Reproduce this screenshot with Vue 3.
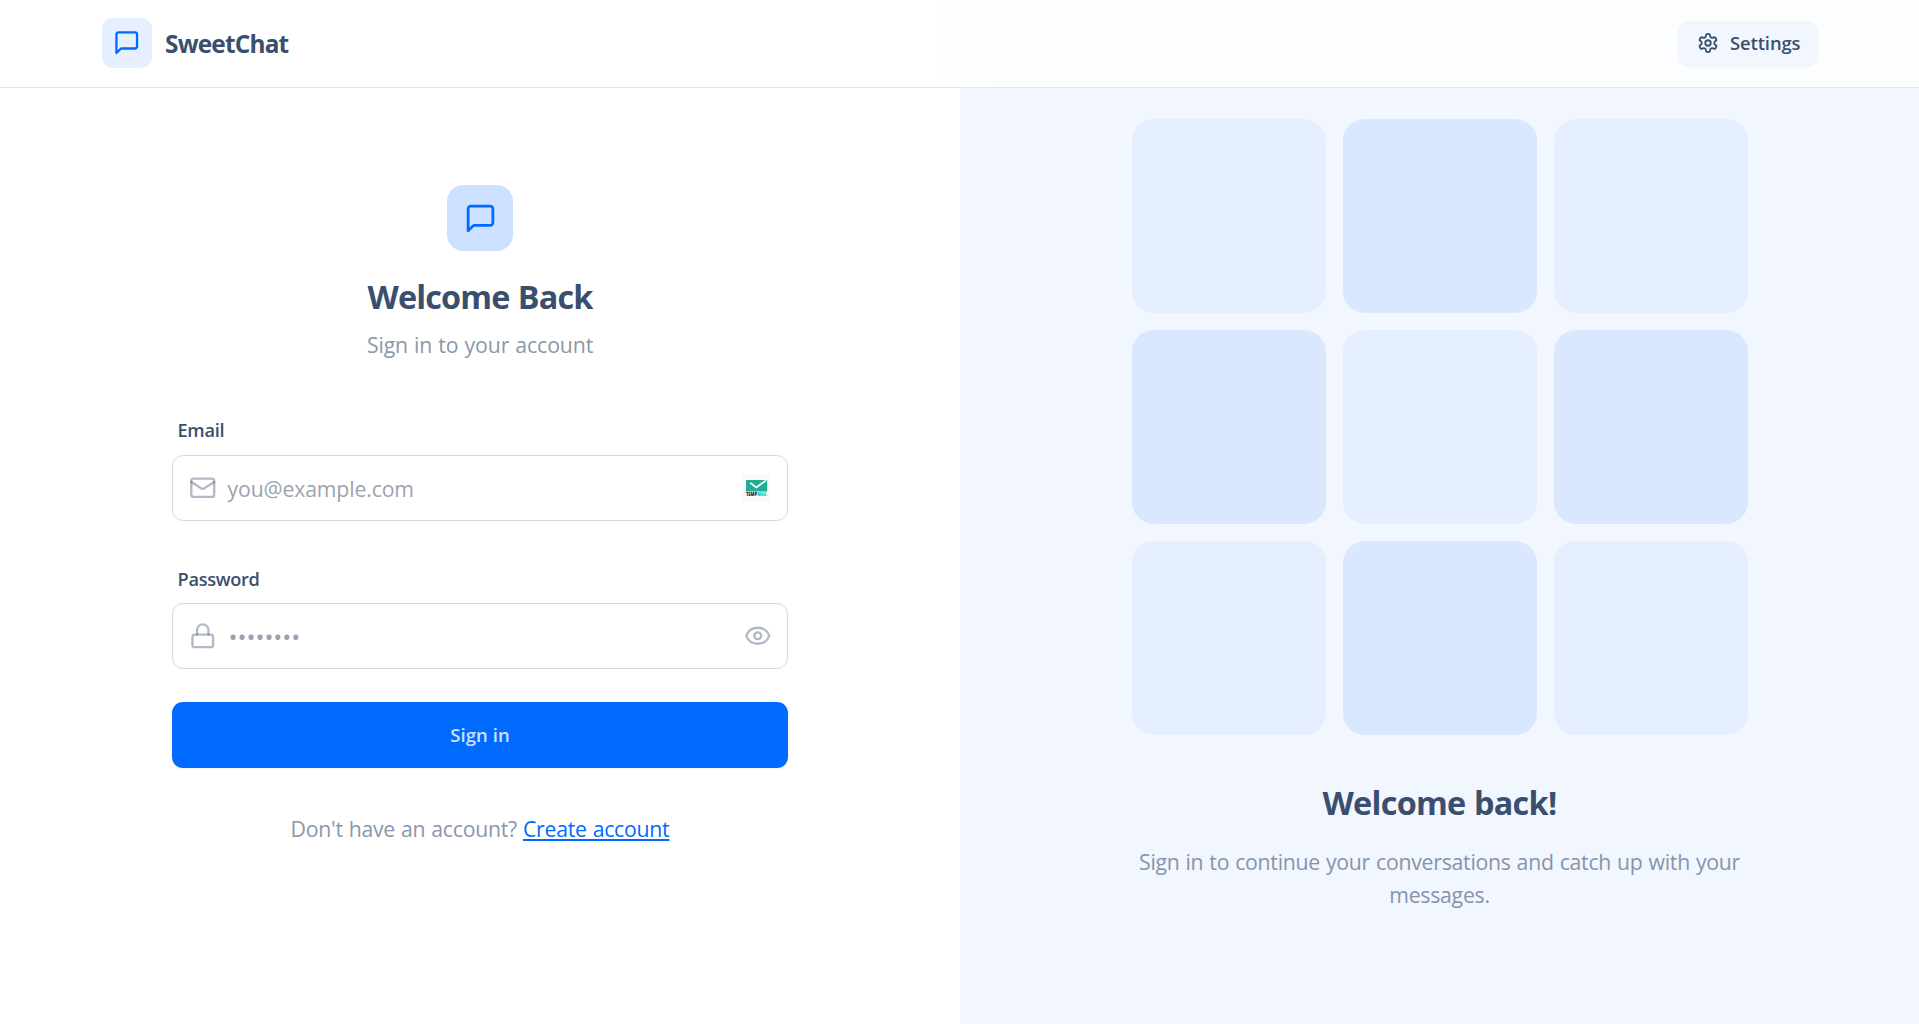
<script setup>
const tiles = [false, true, false, true, false, true, false, true, false]
</script>

<template>
  <div class="page">
    <header class="bar">
      <div class="brand">
        <span class="brand-icon">
          <svg class="icon chat" viewBox="0 0 24 24"><path d="M21 15a2 2 0 0 1-2 2H7l-4 4V5a2 2 0 0 1 2-2h14a2 2 0 0 1 2 2z" /></svg>
        </span>
        <span class="brand-name">SweetChat</span>
      </div>
      <a class="settings">
        <svg class="icon gear" viewBox="0 0 24 24">
          <path d="M12.22 2h-.44a2 2 0 0 0-2 2v.18a2 2 0 0 1-1 1.73l-.43.25a2 2 0 0 1-2 0l-.15-.08a2 2 0 0 0-2.73.73l-.22.38a2 2 0 0 0 .73 2.73l.15.1a2 2 0 0 1 1 1.72v.51a2 2 0 0 1-1 1.74l-.15.09a2 2 0 0 0-.73 2.73l.22.38a2 2 0 0 0 2.73.73l.15-.08a2 2 0 0 1 2 0l.43.25a2 2 0 0 1 1 1.73V20a2 2 0 0 0 2 2h.44a2 2 0 0 0 2-2v-.18a2 2 0 0 1 1-1.73l.43-.25a2 2 0 0 1 2 0l.15.08a2 2 0 0 0 2.73-.73l.22-.39a2 2 0 0 0-.73-2.73l-.15-.08a2 2 0 0 1-1-1.74v-.5a2 2 0 0 1 1-1.74l.15-.09a2 2 0 0 0 .73-2.73l-.22-.38a2 2 0 0 0-2.73-.73l-.15.08a2 2 0 0 1-2 0l-.43-.25a2 2 0 0 1-1-1.73V4a2 2 0 0 0-2-2z" />
          <circle cx="12" cy="12" r="3" />
        </svg>
        <span>Settings</span>
      </a>
    </header>

    <main class="columns">
      <section class="login">
        <div class="hero-icon">
          <svg class="icon chat" viewBox="0 0 24 24"><path d="M21 15a2 2 0 0 1-2 2H7l-4 4V5a2 2 0 0 1 2-2h14a2 2 0 0 1 2 2z" /></svg>
        </div>
        <h1>Welcome Back</h1>
        <p class="sub">Sign in to your account</p>

        <form class="form" @submit.prevent>
          <label class="label email-label">Email</label>
          <div class="field">
            <svg class="icon lead" viewBox="0 0 24 24">
              <rect x="2" y="4" width="20" height="16" rx="2" opacity=".4" />
              <path d="m22 7-8.97 5.7a1.94 1.94 0 0 1-2.06 0L2 7" opacity=".4" />
            </svg>
            <span class="placeholder email-hint">you@example.com</span>
            <span class="mail-badge">
              <svg viewBox="0 0 28 28">
                <path d="M4 6h20.2l1 .8v10.8H4z" fill="#22ad94" />
                <path d="m8.2 8.8 6.1 4.7L24 6.4" fill="none" stroke="#fff" stroke-width="1.7" />
                <text x="4" y="22" textLength="11" lengthAdjust="spacingAndGlyphs" fill="#17203c">TEMP</text>
                <text x="15.2" y="22" textLength="9.6" lengthAdjust="spacingAndGlyphs" fill="#22bfa0">MAIL</text>
              </svg>
            </span>
          </div>

          <label class="label password-label">Password</label>
          <div class="field">
            <svg class="icon lead" viewBox="0 0 24 24">
              <rect x="3" y="11" width="18" height="11" rx="2" opacity=".4" />
              <path d="M7 11V7a5 5 0 0 1 10 0v4" opacity=".4" />
            </svg>
            <span class="placeholder dots">••••••••</span>
            <svg class="icon eye" viewBox="0 0 24 24">
              <path d="M2.062 12.348a1 1 0 0 1 0-.696 10.75 10.75 0 0 1 19.876 0 1 1 0 0 1 0 .696 10.75 10.75 0 0 1-19.876 0" />
              <circle cx="12" cy="12" r="3" />
            </svg>
          </div>

          <button class="submit" type="submit">Sign in</button>
        </form>

        <p class="footer"><span>Don't have an account?</span> <a>Create account</a></p>
      </section>

      <aside class="promo">
        <div class="grid">
          <div v-for="(strong, i) in tiles" :key="i" class="tile" :class="{ strong }"></div>
        </div>
        <h2>Welcome back!</h2>
        <p class="promo-text">Sign in to continue your conversations and catch up with your messages.</p>
      </aside>
    </main>
  </div>
</template>

<style>
body {
  margin: 0;
  background: #fff;
}
</style>

<style scoped>
.page {
  display: flex;
  flex-direction: column;
  height: 1024px;
  overflow: hidden;
  font-family: "Open Sans", "Noto Sans", sans-serif;
  font-size: 21.25px;
  line-height: 33px;
  letter-spacing: -0.26px;
  word-spacing: 0.7px;
  color: #3a4f6e;
}
.icon {
  display: block;
  flex: none;
  fill: none;
  stroke: currentColor;
  stroke-width: 2;
  stroke-linecap: round;
  stroke-linejoin: round;
}
h1,
h2,
p {
  margin: 0;
}

.bar {
  box-sizing: border-box;
  flex: none;
  display: flex;
  align-items: center;
  justify-content: space-between;
  height: 88px;
  padding: 0 101px 1px 102px;
  border-bottom: 1px solid #dfe6f1;
  background: linear-gradient(90deg, #fff 930px, #fcfdff 1010px);
}
.brand {
  display: flex;
  align-items: center;
  gap: 13px;
}
.brand-icon {
  display: flex;
  align-items: center;
  justify-content: center;
  width: 50px;
  height: 50px;
  border-radius: 11px;
  background: #e5efff;
  color: #006aff;
}
.brand-icon .icon {
  width: 27.5px;
  height: 27.5px;
  margin-bottom: 1px;
}
.brand-name {
  margin-top: 1px;
  font-size: 24.4px;
  font-weight: 700;
  letter-spacing: -0.8px;
}
.settings {
  box-sizing: border-box;
  display: flex;
  align-items: center;
  gap: 11px;
  width: 140px;
  height: 45px;
  padding-left: 19px;
  border-radius: 11px;
  background: #f1f6ff;
  box-shadow: 0 1px 2px rgba(0, 0, 0, 0.04);
  font-size: 18.4px;
  font-weight: 600;
  letter-spacing: -0.1px;
}
.settings span {
  margin-bottom: 2px;
}
.gear {
  width: 22px;
  height: 22px;
  margin-bottom: 1px;
}

.columns {
  flex: 1;
  display: flex;
}
.login {
  box-sizing: border-box;
  width: 960px;
  padding-top: 97px;
  display: flex;
  flex-direction: column;
  align-items: center;
}
.hero-icon {
  display: flex;
  align-items: center;
  justify-content: center;
  width: 66px;
  height: 66px;
  border-radius: 16.5px;
  background: #cce0ff;
  color: #006aff;
}
.hero-icon .icon {
  width: 33px;
  height: 33px;
}
h1,
h2 {
  font-size: 32.4px;
  font-weight: 700;
  line-height: 44px;
}
h1 {
  margin-top: 23px;
  letter-spacing: -0.85px;
}
.sub {
  margin-top: 10px;
  letter-spacing: -0.12px;
  color: #8a97ab;
}
.form {
  display: flex;
  flex-direction: column;
  width: 616px;
}
.label {
  height: 27px;
  padding-left: 5.5px;
  font-size: 18.2px;
  font-weight: 600;
  line-height: 27px;
  letter-spacing: -0.3px;
}
.email-label {
  margin-top: 56px;
}
.password-label {
  margin-top: 45px;
}
.field {
  box-sizing: border-box;
  display: flex;
  align-items: center;
  height: 66px;
  margin-top: 11px;
  padding: 0 16px;
  border: 1px solid #d5dbe3;
  border-radius: 11px;
}
.password-label + .field {
  margin-top: 10px;
}
.lead {
  width: 27.5px;
  height: 27.5px;
  margin-bottom: 1px;
  color: #3a4f6e;
}
.placeholder {
  flex: 1;
  margin-left: 11px;
  color: #9ca3af;
}
.email-hint {
  margin-top: 1px;
  letter-spacing: -0.15px;
}
.dots {
  margin-left: 12px;
  font-size: 24px;
  letter-spacing: -0.05px;
}
.mail-badge {
  width: 28px;
  height: 28px;
  margin-right: 1px;
  border-radius: 3px;
  background: #fafafa;
}
.mail-badge svg {
  display: block;
  font: 800 4.6px "Open Sans", sans-serif;
  letter-spacing: 0;
}
.eye {
  width: 27.5px;
  height: 27.5px;
  margin-bottom: 1px;
  color: #b0b9c5;
}
.submit {
  height: 66px;
  margin-top: 33px;
  padding: 0;
  border: 0;
  border-radius: 11px;
  background: #006aff;
  box-shadow: 0 1px 2px rgba(0, 0, 0, 0.05);
  color: #cce1ff;
  font: 600 18.5px/28px "Open Sans", "Noto Sans", sans-serif;
  letter-spacing: 0.1px;
}
.footer {
  margin-top: 44px;
  color: #8a97ab;
}
.footer a {
  color: #006aff;
  text-decoration: underline;
  text-decoration-thickness: 2px;
  text-underline-offset: 2px;
}

.promo {
  flex: 1;
  display: flex;
  flex-direction: column;
  align-items: center;
  padding-top: 31px;
  background: #f1f6ff;
  text-align: center;
}
.grid {
  display: grid;
  grid-template-columns: repeat(3, 1fr);
  gap: 17px;
  width: 616px;
}
.tile {
  height: 194px;
  border-radius: 22px;
  background: #e5eeff;
}
.tile.strong {
  background: #dae8ff;
}
h2 {
  margin-top: 45px;
  letter-spacing: -0.7px;
}
.promo-text {
  width: 616px;
  margin-top: 21px;
  color: #8794aa;
}
</style>
